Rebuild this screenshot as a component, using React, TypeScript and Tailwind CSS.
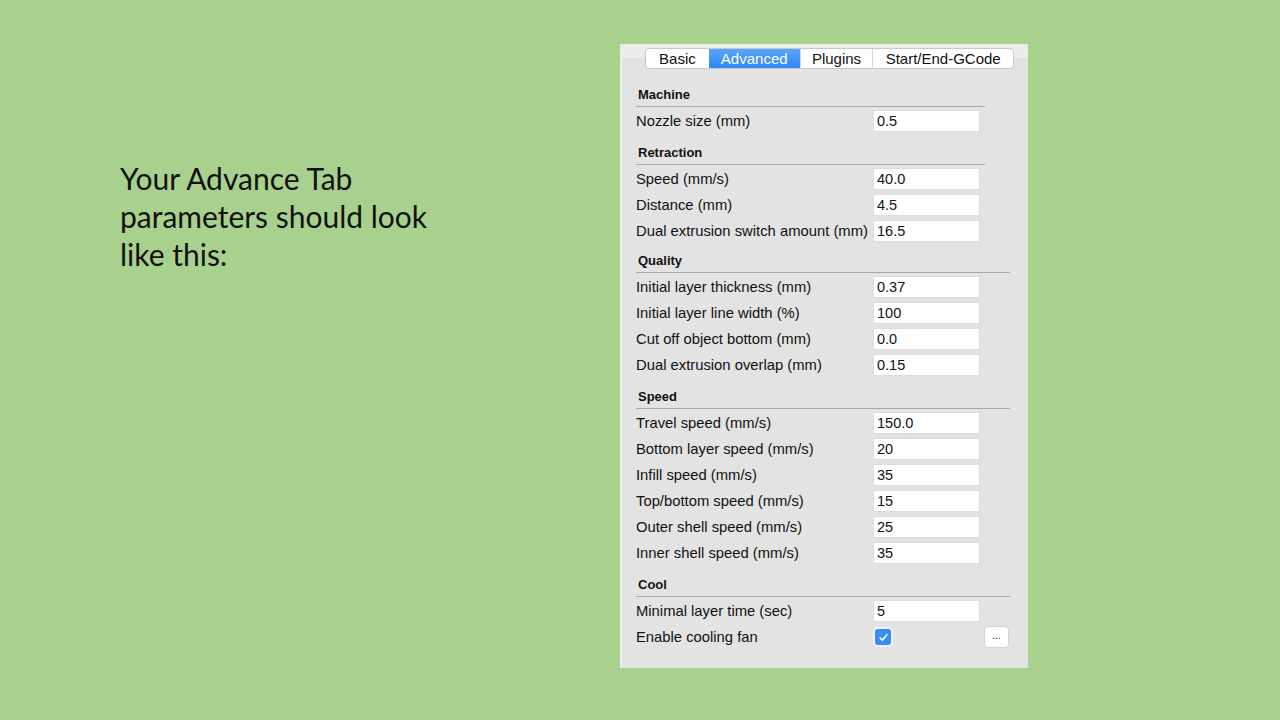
import React from "react";

type Row = { label: string; value?: string; checkbox?: boolean };
type Section = { title: string; lineW: number; gap: string; rows: Row[] };

const sections: Section[] = [
  { title: "Machine", lineW: 349, gap: "", rows: [{ label: "Nozzle size (mm)", value: "0.5" }] },
  {
    title: "Retraction",
    lineW: 349,
    gap: "mt-[8px]",
    rows: [
      { label: "Speed (mm/s)", value: "40.0" },
      { label: "Distance (mm)", value: "4.5" },
      { label: "Dual extrusion switch amount (mm)", value: "16.5" },
    ],
  },
  {
    title: "Quality",
    lineW: 374,
    gap: "mt-[6px]",
    rows: [
      { label: "Initial layer thickness (mm)", value: "0.37" },
      { label: "Initial layer line width (%)", value: "100" },
      { label: "Cut off object bottom (mm)", value: "0.0" },
      { label: "Dual extrusion overlap (mm)", value: "0.15" },
    ],
  },
  {
    title: "Speed",
    lineW: 374,
    gap: "mt-[8px]",
    rows: [
      { label: "Travel speed (mm/s)", value: "150.0" },
      { label: "Bottom layer speed (mm/s)", value: "20" },
      { label: "Infill speed (mm/s)", value: "35" },
      { label: "Top/bottom speed (mm/s)", value: "15" },
      { label: "Outer shell speed (mm/s)", value: "25" },
      { label: "Inner shell speed (mm/s)", value: "35" },
    ],
  },
  {
    title: "Cool",
    lineW: 374,
    gap: "mt-[8px]",
    rows: [
      { label: "Minimal layer time (sec)", value: "5" },
      { label: "Enable cooling fan", checkbox: true },
    ],
  },
];

const tabs = ["Basic", "Advanced", "Plugins", "Start/End-GCode"];
const tabW = ["w-[63px]", "w-[91px]", "w-[73px]", "w-[141px]"];

export default function App() {
  return (
    <div className="w-[1280px] h-[720px] bg-[#a9d18e] flex overflow-hidden">
      <div className="w-[620px] shrink-0 pl-[120px] pt-[159px]">
        <p
          className="text-[30px] leading-[38px] text-[#111] w-[320px]"
          style={{ fontFamily: "Lato, 'Open Sans', sans-serif" }}
        >
          Your Advance Tab parameters should look like this:
        </p>
      </div>
      <div
        className="mt-[44px] w-[408px] h-[624px] bg-[#e3e3e3] border-l-2 border-[#ececec] flex flex-col text-[#111]"
        style={{ fontFamily: "'Liberation Sans', Arial, sans-serif" }}
      >
        <div className="pt-[4px] pl-[23px] bg-[linear-gradient(to_bottom,#ececec_0px,#ececec_14px,#e3e3e3_14px)]">
          <div className="flex w-[369px] h-[21px] rounded-[4px] border border-[#c8c8c8] bg-white overflow-hidden">
            {tabs.map((t, i) => (
              <div
                key={t}
                className={
                  "flex items-center justify-center text-[15px] leading-none " +
                  tabW[i] +
                  (i === 1
                    ? " bg-[linear-gradient(to_bottom,#5aa6fb,#2f86f5)] text-white"
                    : " text-[#111]") +
                  (i > 1 ? " border-l border-[#d6d6d6]" : "")
                }
              >
                {t}
              </div>
            ))}
          </div>
        </div>
        <div className="pl-[14px] pt-[15px] flex flex-col">
          {sections.map((s) => (
            <div key={s.title} className={s.gap}>
              <div className="h-[22px] pl-[2px] pt-[3px] text-[13px] leading-[16px] font-bold">{s.title}</div>
              <div className="h-px bg-[#a8a8a8]" style={{ width: s.lineW }} />
              <div className="mt-[1px] flex flex-col">
                {s.rows.map((r) => (
                  <div key={r.label} className="h-[26px] flex items-center">
                    <div className="w-[237px] shrink-0 text-[14.8px] whitespace-nowrap">{r.label}</div>
                    {r.checkbox ? (
                      <div className="flex items-center">
                        <div className="ml-[2px] w-[16px] h-[16px] rounded-[3px] bg-[#3a8cf4] shadow-[0_0_0_2px_#eef3fb] flex items-center justify-center">
                          <svg width="11" height="11" viewBox="0 0 11 11">
                            <path d="M2 5.8 L4.4 8.2 L9 2.6" stroke="white" strokeWidth="1.6" fill="none" strokeLinecap="round" strokeLinejoin="round" />
                          </svg>
                        </div>
                        <div className="ml-[93px] w-[25px] h-[22px] rounded-[4px] bg-white border border-[#d2d2d2] flex items-center justify-center text-[10px] leading-none pb-[3px]">
                          ...
                        </div>
                      </div>
                    ) : (
                      <div className="w-[107px] h-[22px] bg-white border border-[#dcdcdc] flex items-center pl-[3px] pt-[2px] text-[14.5px]">
                        {r.value}
                      </div>
                    )}
                  </div>
                ))}
              </div>
            </div>
          ))}
        </div>
      </div>
    </div>
  );
}
